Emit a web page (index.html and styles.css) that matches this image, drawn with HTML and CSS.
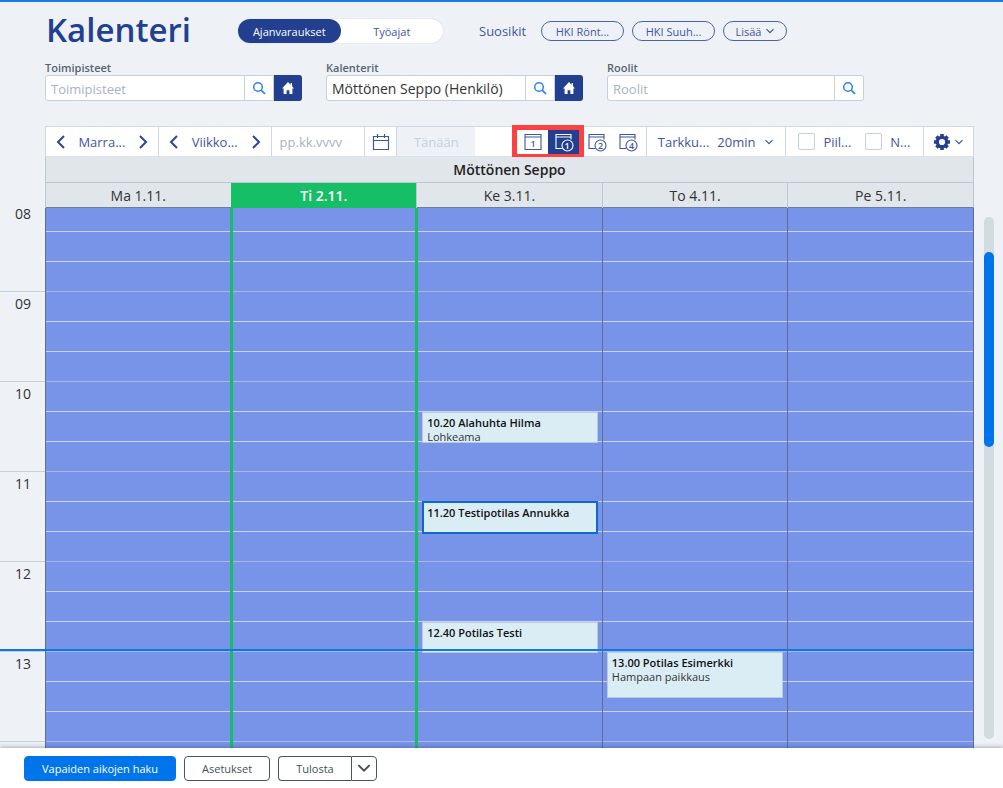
FILE: index.html
```html
<!DOCTYPE html>
<html lang="fi">

<head>
<meta charset="utf-8">
<title>Kalenteri</title>
<link rel="stylesheet" href="styles.css">
</head>

<body>

<!-- shared icons -->
<svg class="sprite" aria-hidden="true">
  <symbol id="search" viewBox="0 0 14 14">
    <circle cx="6" cy="6" r="4.3" fill="none" stroke="currentColor" stroke-width="1.5"/>
    <path d="M9.2 9.2L13 13" stroke="currentColor" stroke-width="1.7"/>
  </symbol>
  <symbol id="home" viewBox="0 0 14 14">
    <path d="M7 1L1 7.4h1.6V13h3V9.3h2.8V13h3V7.4H13L11 5.2V2H9.6v1.7z" fill="currentColor"/>
  </symbol>
  <symbol id="down" viewBox="0 0 10 10">
    <path d="M1.5 3.2L5 6.7l3.5-3.5" fill="none" stroke="currentColor" stroke-width="1.2"/>
  </symbol>
  <symbol id="left" viewBox="0 0 10 14">
    <path d="M8 1L2 7l6 6" fill="none" stroke="currentColor" stroke-width="2"/>
  </symbol>
  <symbol id="right" viewBox="0 0 10 14">
    <path d="M2 1l6 6-6 6" fill="none" stroke="currentColor" stroke-width="2"/>
  </symbol>
</svg>

<header class="header">
  <div class="titleRow">
    <h1>Kalenteri</h1>
    <div class="toggle">
      <button class="toggleButton active">Ajanvaraukset</button>
      <button class="toggleButton">Työajat</button>
    </div>
    <div class="favorites">
      <span class="favoritesTitle">Suosikit</span>
      <button class="pill">HKI Rönt...</button>
      <button class="pill">HKI Suuh...</button>
      <button class="pill pillMore">Lisää <svg class="iconDown"><use href="#down"/></svg></button>
    </div>
  </div>

  <div class="filters">
    <div class="filter">
      <label for="offices">Toimipisteet</label>
      <div class="inputGroup">
        <input type="text" id="offices" placeholder="Toimipisteet">
        <button class="searchButton" aria-label="Hae"><svg><use href="#search"/></svg></button>
        <button class="homeButton" aria-label="Oma"><svg><use href="#home"/></svg></button>
      </div>
    </div>
    <div class="filter">
      <label for="calendars">Kalenterit</label>
      <div class="inputGroup">
        <input type="text" id="calendars" value="Möttönen Seppo (Henkilö)">
        <button class="searchButton" aria-label="Hae"><svg><use href="#search"/></svg></button>
        <button class="homeButton" aria-label="Oma"><svg><use href="#home"/></svg></button>
      </div>
    </div>
    <div class="filter">
      <label for="roles">Roolit</label>
      <div class="inputGroup">
        <input type="text" id="roles" placeholder="Roolit">
        <button class="searchButton" aria-label="Hae"><svg><use href="#search"/></svg></button>
      </div>
    </div>
  </div>
</header>

<div class="toolbar">
  <div class="tool stepper">
    <button aria-label="Edellinen kuukausi"><svg><use href="#left"/></svg></button>
    <span>Marra...</span>
    <button aria-label="Seuraava kuukausi"><svg><use href="#right"/></svg></button>
  </div>
  <div class="tool stepper">
    <button aria-label="Edellinen viikko"><svg><use href="#left"/></svg></button>
    <span>Viikko...</span>
    <button aria-label="Seuraava viikko"><svg><use href="#right"/></svg></button>
  </div>
  <div class="tool datePicker">
    <input type="text" placeholder="pp.kk.vvvv" aria-label="Päivämäärä">
    <button aria-label="Avaa kalenteri">
      <svg viewBox="0 0 18 18">
        <path d="M1.5 3.5h15v13h-15zM1.5 7.5h15M5.5 1v4M12.5 1v4" fill="none" stroke="currentColor" stroke-width="1.2"/>
      </svg>
    </button>
  </div>
  <div class="tool todayTool">
    <button class="today" disabled>Tänään</button>
  </div>
  <div class="tool views">
    <div class="highlighted">
      <button class="view" aria-label="Päivä">
        <svg viewBox="0 0 20 20">
          <path d="M2 2.5h16v15H2zM2 5h16" fill="none" stroke="currentColor" stroke-width="1.1"/>
          <text x="10" y="15" class="viewNumber">1</text>
        </svg>
      </button>
      <button class="view selected" aria-label="Viikko">
        <svg viewBox="0 0 20 20">
          <path d="M8 16.5H2v-14h15v5M2 5h15" fill="none" stroke="currentColor" stroke-width="1.1"/>
          <circle cx="13.5" cy="13.5" r="5.5" fill="none" stroke="currentColor" stroke-width="1.1"/>
          <text x="13" y="17" class="viewNumber">1</text>
        </svg>
      </button>
    </div>
    <button class="view" aria-label="2 viikkoa">
      <svg viewBox="0 0 20 20">
        <path d="M8 16.5H2v-14h15v5M2 5h15" fill="none" stroke="currentColor" stroke-width="1.1"/>
        <circle cx="13.5" cy="13.5" r="5.5" fill="none" stroke="currentColor" stroke-width="1.1"/>
        <text x="13.5" y="17" class="viewNumber">2</text>
      </svg>
    </button>
    <button class="view" aria-label="4 viikkoa">
      <svg viewBox="0 0 20 20">
        <path d="M8 16.5H2v-14h15v5M2 5h15" fill="none" stroke="currentColor" stroke-width="1.1"/>
        <circle cx="13.5" cy="13.5" r="5.5" fill="none" stroke="currentColor" stroke-width="1.1"/>
        <text x="13.5" y="17" class="viewNumber">4</text>
      </svg>
    </button>
  </div>
  <div class="tool precision">
    <label for="precision">Tarkku...</label>
    <select id="precision">
      <option>20min</option>
    </select>
    <svg class="iconDown"><use href="#down"/></svg>
  </div>
  <div class="tool checks">
    <label><input type="checkbox">Piil...</label>
    <label><input type="checkbox">N...</label>
  </div>
  <div class="tool settings">
    <button aria-label="Asetukset">
      <svg class="gear" viewBox="-8 -8 16 16">
        <circle r="4.7" fill="none" stroke="currentColor" stroke-width="3.2"/>
        <path d="M0-8V-5M0 5V8M-8 0H-5M5 0H8M-5.6-5.6L-4-4M4 4L5.6 5.6M-5.6 5.6L-4 4M4-4L5.6-5.6" stroke="currentColor" stroke-width="3.6"/>
      </svg>
      <svg class="iconDown"><use href="#down"/></svg>
    </button>
  </div>
</div>

<main class="main">
  <div class="calendar">
    <div class="person">Möttönen Seppo</div>
    <div class="days">
      <div class="day">Ma 1.11.</div>
      <div class="day dayToday">Ti 2.11.</div>
      <div class="day">Ke 3.11.</div>
      <div class="day">To 4.11.</div>
      <div class="day">Pe 5.11.</div>
    </div>
    <div class="schedule">
      <div class="hours">
        <div class="hour">08</div>
        <div class="hour">09</div>
        <div class="hour">10</div>
        <div class="hour">11</div>
        <div class="hour">12</div>
        <div class="hour">13</div>
      </div>
      <div class="columns">
        <div class="column"></div>
        <div class="column columnToday"></div>
        <div class="column">
          <div class="appointment" style="top: 204px; height: 31px"><b>10.20 Alahuhta Hilma</b>Lohkeama</div>
          <div class="appointment current" style="top: 293px; height: 33px"><b>11.20 Testipotilas Annukka</b></div>
          <div class="appointment" style="top: 414px; height: 31px"><b>12.40 Potilas Testi</b></div>
        </div>
        <div class="column">
          <div class="appointment" style="top: 444px; height: 46px"><b>13.00 Potilas Esimerkki</b>Hampaan paikkaus</div>
        </div>
        <div class="column"></div>
      </div>
      <div class="nowLine" style="top: 441px"></div>
    </div>
  </div>
  <div class="scrollbar"><div class="thumb"></div></div>
</main>

<footer class="footer">
  <button class="button primary">Vapaiden aikojen haku</button>
  <button class="button">Asetukset</button>
  <div class="split">
    <button class="button">Tulosta</button>
    <button class="button splitArrow" aria-label="Lisää vaihtoehtoja"><svg class="iconDown"><use href="#down"/></svg></button>
  </div>
</footer>

</body>

</html>
```
FILE: styles.css
```css
* {
  box-sizing: border-box;
}

body {
  margin: 0;
  height: 100vh;
  display: flex;
  flex-direction: column;
  overflow: hidden;
  background: #eef2f7;
  border-top: 2px solid #1b7ce5;
  font-family: "Segoe UI", "Open Sans", "Noto Sans", sans-serif;
  font-size: 14px;
  color: #333;
}

button, input, select {
  font: inherit;
  color: inherit;
  margin: 0;
  padding: 0;
  border: none;
  background: none;
}

button {
  display: flex;
  align-items: center;
  justify-content: center;
  cursor: pointer;
  white-space: nowrap;
}

.sprite {
  position: absolute;
  width: 0;
  height: 0;
}

.iconDown {
  width: 10px;
  height: 10px;
}

/* Header */

.header {
  padding: 6px 29px 0 45px;
}

.titleRow {
  display: flex;
  align-items: center;
  height: 46px;
}

h1 {
  width: 193px;
  margin: 0;
  font-size: 33px;
  line-height: 44px;
  padding: 0 0 2px 1px;
  font-weight: 600;
  color: #233f8f;
}

.toggle {
  display: flex;
  width: 205px;
  height: 24px;
  border-radius: 12px;
  background: #fff;
  font-size: 11px;
  color: #3f569c;
  box-shadow: 0 0 1px #a9b6d5;
}

.toggleButton {
  flex: 1;
  border-radius: 12px;
}

.toggleButton.active {
  background: #233f8f;
  color: #fff;
}

.favorites {
  display: flex;
  align-items: center;
  gap: 8px;
  margin-left: 36px;
  font-size: 13px;
  color: #3f569c;
}

.favoritesTitle {
  width: 54px;
}

.pill {
  width: 83px;
  height: 20px;
  border: 1px solid #4a62a8;
  border-radius: 10px;
  font-size: 11px;
}

.pillMore {
  width: 64px;
  gap: 3px;
}

.filters {
  display: flex;
  gap: 24px;
  margin-top: 6px;
}

.filter {
  width: 257px;
}

.filter > label {
  display: block;
  font-size: 11px;
  line-height: 15px;
  font-weight: 600;
  color: #59636f;
}

.inputGroup {
  display: flex;
  height: 26px;
}

.inputGroup input {
  flex: 1;
  min-width: 0;
  padding: 0 5px;
  background: #fff;
  border: 1px solid #c6d1de;
  border-radius: 3px 0 0 3px;
  color: #333;
}

::placeholder {
  font-size: 13px;
  color: #a9b3bf;
  opacity: 1;
}

.searchButton {
  width: 29px;
  background: #fff;
  border: 1px solid #c6d1de;
  border-left: none;
  color: #2b85e6;
}

.searchButton:last-child {
  border-radius: 0 3px 3px 0;
}

.homeButton {
  width: 28px;
  background: #233f8f;
  border-radius: 0 3px 3px 0;
  color: #fff;
}

.inputGroup svg {
  width: 14px;
  height: 14px;
}

/* Toolbar */

.toolbar {
  display: flex;
  height: 31px;
  margin: 25px 29px 0 45px;
  border: 1px solid #cdd8e4;
  border-bottom-color: #d9e2ea;
  background: #fff;
  font-size: 13px;
  color: #3f569c;
}

.tool {
  display: flex;
  align-items: center;
  flex: 1 1 113px;
  min-width: 0;
  border-right: 1px solid #cdd8e4;
  white-space: nowrap;
}

.stepper {
  justify-content: space-between;
  padding: 0 10px;
}

.stepper svg {
  width: 10px;
  height: 14px;
  color: #2c4798;
}

.datePicker {
  flex-basis: 126px;
  align-items: stretch;
}

.datePicker input {
  flex: 1;
  min-width: 0;
  padding: 0 8px;
}

.datePicker button {
  width: 32px;
  border-left: 1px solid #cdd8e4;
}

.datePicker svg {
  width: 18px;
  height: 18px;
}

.todayTool {
  flex-basis: 115px;
  align-items: stretch;
  border-right: none;
}

.today {
  width: 78px;
  background: #eef2f7;
  color: #c5d0dc;
}

.views {
  flex-basis: 135px;
}

.highlighted {
  display: flex;
  margin: -2px -3px -2px 0;
  border: 5px solid #fd4041;
}

.view {
  width: 31px;
  height: 24px;
}

.view.selected {
  background: #233f8f;
  color: #fff;
}

.view svg {
  width: 20px;
  height: 20px;
}

.viewNumber {
  font-size: 9px;
  font-weight: 600;
  fill: currentColor;
  text-anchor: middle;
}

.precision {
  flex-basis: 140px;
  justify-content: center;
  gap: 8px;
}

.precision select {
  appearance: none;
}

.checks {
  flex-basis: 138px;
  gap: 14px;
  padding-left: 12px;
}

.checks label {
  display: flex;
  align-items: center;
  gap: 8px;
}

.checks input {
  appearance: none;
  width: 17px;
  height: 17px;
  border: 1px solid #c3cfdc;
  border-radius: 2px;
  background: #fff;
}

.settings {
  flex-basis: 49px;
  justify-content: center;
  border-right: none;
}

.settings button {
  gap: 4px;
}

.gear {
  width: 16px;
  height: 16px;
  color: #233f8f;
}

/* Calendar */

.main {
  flex: 1;
  display: flex;
  min-height: 0;
}

.calendar {
  flex: 1;
  display: flex;
  flex-direction: column;
  min-width: 0;
}

.person, .days {
  flex: none;
  margin-left: 45px;
  background: #e1e6ea;
  border: 1px solid #bdc6d2;
  border-top: none;
}

.person {
  height: 26px;
  line-height: 25px;
  text-align: center;
  font-weight: 600;
  color: #222;
}

.days, .columns {
  display: grid;
  grid-template-columns: repeat(5, 1fr);
}

.days {
  height: 25px;
  border-left: none;
  border-bottom-color: #6f7c9c;
}

.day {
  line-height: 25px;
  text-align: center;
  border-left: 1px solid #bdc6d2;
}

.dayToday {
  background: #16bf66;
  border-color: #16bf66;
  color: #fff;
  font-weight: 600;
}

.schedule {
  position: relative;
  flex: 1;
  display: flex;
  min-height: 0;
}

.hours {
  width: 45px;
}

.hour {
  height: 90px;
  padding: 2px 0 0 1px;
  line-height: 20px;
  text-align: center;
  border-bottom: 1px solid #c6d0d7;
}

/* the view is scrolled a few pixels into the first hour */
.hour:first-child {
  height: 84px;
  padding-top: 0;
  line-height: 12px;
}

.columns {
  flex: 1;
  overflow: hidden;
  border-right: 1px solid #5d6c9e;
}

.column {
  position: relative;
  border-left: 1px solid #5d6c9e;
  background-color: #7894e9;
  background-image: linear-gradient(transparent 29px, #c9d3f5 29px, #c9d3f5 30px, transparent 30px, transparent 59px, #c9d3f5 59px, #c9d3f5 60px, transparent 60px, transparent 89px, #a7b8e3 89px);
  background-size: 100% 90px;
  background-position: 0 -6px;
}

.columnToday, .columnToday + .column {
  margin-left: -1px;
  border-left: 3px solid #16bf66;
}

.appointment {
  position: absolute;
  left: 4px;
  right: 4px;
  padding: 3px 4px;
  overflow: hidden;
  background: #daedf5;
  border: 1px solid #b9cbd9;
  font-size: 11px;
  line-height: 14px;
}

.appointment b {
  display: block;
  font-weight: 600;
  color: #111;
}

.appointment.current {
  padding: 3px;
  border: 2px solid #1169c9;
}

.nowLine {
  position: absolute;
  left: 0;
  right: 0;
  height: 2px;
  background: #0c78e8;
}

.scrollbar {
  width: 10px;
  margin: 60px 9px 9px 10px;
  padding-top: 35px;
  border-radius: 5px;
  background: #d2dbe0;
}

.thumb {
  height: 195px;
  border-radius: 5px;
  background: #0075eb;
}

/* Footer */

.footer {
  position: relative;
  display: flex;
  align-items: center;
  gap: 8px;
  height: 40px;
  padding: 0 24px;
  background: #fff;
  box-shadow: 0 -1px 4px rgba(40, 50, 60, 0.35);
}

.button {
  height: 25px;
  padding: 0 17px;
  border: 1px solid #4b555f;
  border-radius: 4px;
  font-size: 11px;
  color: #46505a;
}

.primary {
  border-color: #0075eb;
  background: #0075eb;
  color: #fff;
}

.split {
  display: flex;
}

.split .button:first-child {
  border-right: none;
  border-radius: 4px 0 0 4px;
}

.split .splitArrow {
  width: 26px;
  padding: 0;
  border-radius: 0 4px 4px 0;
}

.splitArrow .iconDown {
  width: 16px;
  height: 16px;
}
```
